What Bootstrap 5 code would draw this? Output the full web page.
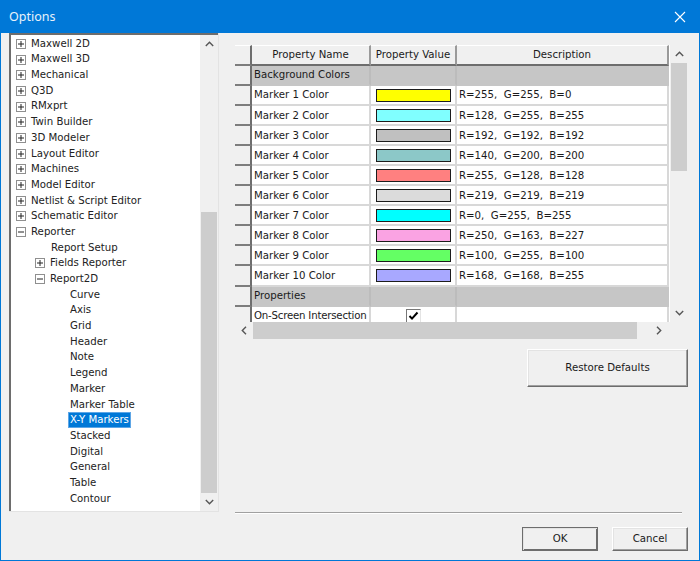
<!DOCTYPE html>
<html lang="en">
<head>
<meta charset="utf-8">
<title>Options</title>
<link href="https://cdn.jsdelivr.net/npm/bootstrap@5.3.0/dist/css/bootstrap.min.css" rel="stylesheet">
<style>
html,body{margin:0;height:561px;overflow:hidden;background:#f0f0f0}
body{font-family:"DejaVu Sans","Liberation Sans",sans-serif;font-size:10.2px;color:#1a1a1a;line-height:1}
.dlg-win{width:700px;height:561px;border:solid #0078d7;border-width:0 1px 1px 1px;background:#f0f0f0}
.dlg-title{height:33px;background:#0078d7;color:#e8f2fb;font-family:"Noto Sans","Open Sans",sans-serif;font-size:12.5px;padding:1px 10px 0 8px}
.dlg-title svg{display:block;margin-right:3px}
.dlg-body{height:527px}
.tree-box{width:210px;height:479px;margin-left:8px;border:solid #e3e3e3;border-width:0 1px 1px 0;box-shadow:inset 2px 2px 0 #6d6d6d;background:#fff;padding:2px 0 0 2px}
.tree-list{flex:1 1 0;margin:0;padding:1px 0 0;list-style:none;background:#fff;overflow:hidden}
.tree-row{height:15.69px;padding-left:5px;white-space:nowrap;color:#222}
.tree-row.lv1{padding-left:24px}
.tree-row.lv2{padding-left:59px}
.tree-row.lv0n{padding-left:40px}
.tree-row svg{flex:none;width:10px;height:10px;margin-right:5px}
.tree-sel{background:#0078d7;color:#fff;padding:3px 2px;margin-left:-2px;outline:1px solid #5ea6e6;outline-offset:-1px}
.vbar{width:18px;background:#f0f0f0;flex:none;position:relative}
.vbar-thumb{background:#cdcdcd;width:16px;margin-left:1px}
.arrow-v{height:18px}
.right-pane{width:453px;margin-left:16px;padding-top:12px}
.grid-clip{width:435px;height:277px;overflow:hidden;background:#fff}
.prop-grid{width:434px;table-layout:fixed;border-collapse:separate;border-spacing:0;margin:0}
.prop-grid td,.prop-grid th{padding:1px 2px 0;height:20.05px;font-weight:400;background:#fff;color:#1a1a1a;border:solid #d8d8d8;border-width:0 2px 2px 0;white-space:nowrap;overflow:hidden;vertical-align:middle;box-shadow:none;font-size:10.2px}
.prop-grid th{background:#f0f0f0;text-align:center;height:21px;border-bottom:2px solid #6d6d6d;border-right:2px solid #9a9a9a;border-top:1px solid #fff}
.prop-grid .cell-hd{width:17px;background:#f0f0f0;border-right:2px solid #6d6d6d;border-bottom:2px solid #7d7d7d;padding:0}
.prop-grid tr.sect td{background:#c6c6c6;border-color:#c6c6c6}
.prop-grid tr.sect td.cell-hd{background:#f0f0f0;border-right-color:#6d6d6d;border-bottom-color:#7d7d7d}
.prop-grid tr.sect td.sep{border-right-color:#bcbcbc}
.prop-grid td.name-tight{padding-right:0;letter-spacing:-.02em}
.swatch{display:block;height:13px;margin:-1px 2px 0 3px;border:1px solid #1c1c1c;outline:0}
.tick-box{display:inline-flex;width:15px;height:15px;border:1px solid;border-color:#777 #e4e4e4 #e4e4e4 #777;background:#fff;vertical-align:middle}
.hbar{height:17px;width:435px;padding-right:2px}
.hbar-thumb{width:384px;height:17px;background:#cdcdcd}
.hbar-arrow{width:18px;height:17px}
.win-btn{background:#f0f0f0;color:#1a1a1a;border:1px solid;border-color:#fff #6d6d6d #6d6d6d #fff;box-shadow:inset -1px -1px 0 #a0a0a0,inset 1px 1px 0 #e3e3e3;border-radius:0;padding:0;font-size:10.2px;line-height:1}
.win-btn:hover{background:#f0f0f0;color:#1a1a1a;border-color:#fff #6d6d6d #6d6d6d #fff}
.btn-restore{width:161px;height:38px}
.restore-row{padding:10px 0 0 0}
.sep-line{height:2px;margin:0;width:447px;background:#a0a0a0;border-bottom:1px solid #fff;opacity:1;border-top:0}
.foot-row{height:46px;padding:13px 0 0 0;gap:14px}
.btn-foot{width:76px;height:24px}
.btn-ok{border-color:#6d6d6d;box-shadow:inset 1px 1px 0 #e3e3e3,inset -1px -1px 0 #6d6d6d}
.spacer-fill{flex:1 1 0}
</style>
</head>
<body>
<div class="dlg-win d-flex flex-column">
  <div class="dlg-title d-flex align-items-center justify-content-between">
    <span>Options</span>
    <svg width="12" height="12" viewBox="0 0 12 12" aria-hidden="true"><path d="M1 1 11 11M11 1 1 11" stroke="#fff" stroke-width="1.1" fill="none"/></svg>
  </div>
  <div class="dlg-body d-flex">
    <div class="tree-box d-flex">
      <ul class="tree-list" id="tree"></ul>
      <div class="vbar d-flex flex-column">
        <div class="arrow-v d-flex align-items-center justify-content-center"><svg width="9" height="6" viewBox="0 0 9 6"><path d="M.8 5 4.5 1.3 8.2 5" fill="none" stroke="#555" stroke-width="1.4"/></svg></div>
        <div class="flex-grow-1 d-flex flex-column justify-content-end"><div class="vbar-thumb" style="height:281px"></div></div>
        <div class="arrow-v d-flex align-items-center justify-content-center"><svg width="9" height="6" viewBox="0 0 9 6"><path d="M.8 1 4.5 4.7 8.2 1" fill="none" stroke="#555" stroke-width="1.4"/></svg></div>
      </div>
    </div>
    <div class="right-pane d-flex flex-column">
      <div class="d-flex">
        <div class="grid-clip">
          <table class="prop-grid" id="grid">
            <colgroup><col style="width:17px"><col style="width:119px"><col style="width:86px"><col></colgroup>
          </table>
        </div>
        <div class="vbar" style="height:277px">
          <div class="d-flex flex-column h-100">
            <div class="arrow-v d-flex align-items-center justify-content-center"><svg width="9" height="6" viewBox="0 0 9 6"><path d="M.8 5 4.5 1.3 8.2 5" fill="none" stroke="#555" stroke-width="1.4"/></svg></div>
            <div class="vbar-thumb" style="height:108px"></div>
            <div class="flex-grow-1"></div>
            <div class="arrow-v d-flex align-items-center justify-content-center"><svg width="9" height="6" viewBox="0 0 9 6"><path d="M.8 1 4.5 4.7 8.2 1" fill="none" stroke="#555" stroke-width="1.4"/></svg></div>
          </div>
        </div>
      </div>
      <div class="hbar d-flex">
        <div class="hbar-arrow d-flex align-items-center justify-content-center"><svg width="6" height="9" viewBox="0 0 6 9"><path d="M5 .8 1.3 4.5 5 8.2" fill="none" stroke="#555" stroke-width="1.4"/></svg></div>
        <div class="hbar-thumb"></div>
        <div class="flex-grow-1"></div>
        <div class="hbar-arrow d-flex align-items-center justify-content-center"><svg width="6" height="9" viewBox="0 0 6 9"><path d="M1 .8 4.7 4.5 1 8.2" fill="none" stroke="#555" stroke-width="1.4"/></svg></div>
      </div>
      <div class="restore-row d-flex justify-content-end">
        <button type="button" class="btn win-btn btn-restore">Restore Defaults</button>
      </div>
      <div class="spacer-fill"></div>
      <hr class="sep-line">
      <div class="foot-row d-flex justify-content-end">
        <button type="button" class="btn win-btn btn-foot btn-ok">OK</button>
        <button type="button" class="btn win-btn btn-foot">Cancel</button>
      </div>
    </div>
  </div>
</div>
<script>
const plus='<svg viewBox="0 0 10 10"><rect x=".5" y=".5" width="9" height="9" fill="#fff" stroke="#8f8f8f"/><path d="M2 5H8M5 2V8" stroke="#222"/></svg>';
const minus='<svg viewBox="0 0 10 10"><rect x=".5" y=".5" width="9" height="9" fill="#fff" stroke="#8f8f8f"/><path d="M2 5H8" stroke="#222"/></svg>';
const tree=[
...["Maxwell 2D","Maxwell 3D","Mechanical","Q3D","RMxprt","Twin Builder","3D Modeler","Layout Editor","Machines","Model Editor","Netlist & Script Editor","Schematic Editor"].map(t=>[t,'','p']),
["Reporter",'','m'],["Report Setup",'lv0n',''],["Fields Reporter",'lv1','p'],["Report2D",'lv1','m'],
...["Curve","Axis","Grid","Header","Note","Legend","Marker","Marker Table"].map(t=>[t,'lv2','']),
["X-Y Markers",'lv2','s'],
...["Stacked","Digital","General","Table","Contour"].map(t=>[t,'lv2',''])];
document.getElementById('tree').innerHTML=tree.map(([t,c,k])=>{
 const esc=t.replace('&','&amp;');
 const ic=k==='p'?plus:k==='m'?minus:'';
 const tx=k==='s'?`<span class="tree-sel">${esc}</span>`:`<span>${esc}</span>`;
 return `<li class="tree-row ${c} d-flex align-items-center">${ic}${tx}</li>`}).join('');
const rows=[["Marker 1 Color","#ffff00","R=255,  G=255,  B=0"],["Marker 2 Color","#80ffff","R=128,  G=255,  B=255"],["Marker 3 Color","#c0c0c0","R=192,  G=192,  B=192"],["Marker 4 Color","#8cc8c8","R=140,  G=200,  B=200"],["Marker 5 Color","#ff8080","R=255,  G=128,  B=128"],["Marker 6 Color","#dbdbdb","R=219,  G=219,  B=219"],["Marker 7 Color","#00ffff","R=0,  G=255,  B=255"],["Marker 8 Color","#faa3e3","R=250,  G=163,  B=227"],["Marker 9 Color","#64ff64","R=100,  G=255,  B=100"],["Marker 10 Color","#a8a8ff","R=168,  G=168,  B=255"]];
let h='<thead><tr><th class="cell-hd"></th><th>Property Name</th><th>Property Value</th><th>Description</th></tr></thead><tbody>';
const sect=t=>`<tr class="sect"><td class="cell-hd"></td><td class="sep">${t}</td><td class="sep"></td><td></td></tr>`;
h+=sect("Background Colors");
rows.forEach(r=>{h+=`<tr><td class="cell-hd"></td><td>${r[0]}</td><td><span class="swatch" style="background:${r[1]}"></span></td><td style="white-space:pre">${r[2]}</td></tr>`});
h+=sect("Properties");
h+=`<tr><td class="cell-hd"></td><td class="name-tight">On-Screen Intersection</td><td class="text-center"><span class="tick-box align-items-center justify-content-center"><svg width="11" height="10" viewBox="0 0 11 10"><path d="M1.5 5 4 7.6 9.5 1.5" fill="none" stroke="#000" stroke-width="2"/></svg></span></td><td></td></tr></tbody>`;
document.getElementById('grid').insertAdjacentHTML('beforeend',h);
</script>
<script src="https://cdn.jsdelivr.net/npm/bootstrap@5.3.0/dist/js/bootstrap.bundle.min.js"></script>
</body>
</html>
